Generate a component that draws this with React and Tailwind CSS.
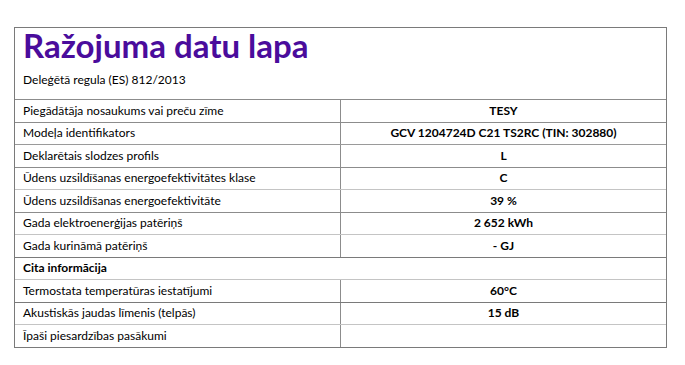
const rows = [
  { label: 'Piegādātāja nosaukums vai preču zīme', value: 'TESY', line: 'border-[#8c8c8c]' },
  { label: 'Modeļa identifikators', value: 'GCV 1204724D C21 TS2RC (TIN: 302880)', line: 'border-[#8c8c8c]' },
  { label: 'Deklarētais slodzes profils', value: 'L', line: 'border-[#9a9a9a]' },
  { label: 'Ūdens uzsildīšanas energoefektivitātes klase', value: 'C', line: 'border-[#8c8c8c]' },
  { label: 'Ūdens uzsildīšanas energoefektivitāte', value: '39 %', line: 'border-[#c4c4c4]' },
  { label: 'Gada elektroenerģijas patēriņš', value: '2 652 kWh', line: 'border-[#8c8c8c]' },
  { label: 'Gada kurināmā patēriņš', value: '- GJ', line: 'border-[#c4c4c4]' },
  { label: 'Cita informācija', section: true, line: 'border-[#7a7a7a]' },
  { label: 'Termostata temperatūras iestatījumi', value: '60°C', line: 'border-[#c4c4c4]' },
  { label: 'Akustiskās jaudas līmenis (telpās)', value: '15 dB', line: 'border-[#7a7a7a]' },
  { label: 'Īpaši piesardzības pasākumi', value: '', line: 'border-[#c4c4c4]' },
];

export default function App() {
  return (
    <div className="w-[685px] h-[365px] bg-white pt-[27px] pl-[14px]" style={{ fontFamily: 'Lato, "Noto Sans", sans-serif' }}>
      <div className="w-[653px] border border-[#7a7a7a] text-black">
        {/* header */}
        <div className="h-[71px] pl-[8px]">
          <h1 className="text-[33px] leading-[34px] font-bold text-[#4a0c9c]">Ražojuma datu lapa</h1>
          <p className="text-[12px] mt-[10px] leading-[16px]">Deleģētā regula (ES) 812/2013</p>
        </div>

        {rows.map((r) => (
          <div key={r.label} className={`flex h-[22.5px] border-t ${r.line}`}>
            {r.section ? (
              <div className="flex-1 pl-[8px] flex items-center text-[12px] font-bold">{r.label}</div>
            ) : (
              <>
                <div className="w-[326px] shrink-0 border-r border-[#8c8c8c] pl-[8px] flex items-center text-[12px]">
                  {r.label}
                </div>
                <div className="flex-1 flex items-center justify-center text-[12px] font-bold">{r.value}</div>
              </>
            )}
          </div>
        ))}
      </div>
    </div>
  );
}
